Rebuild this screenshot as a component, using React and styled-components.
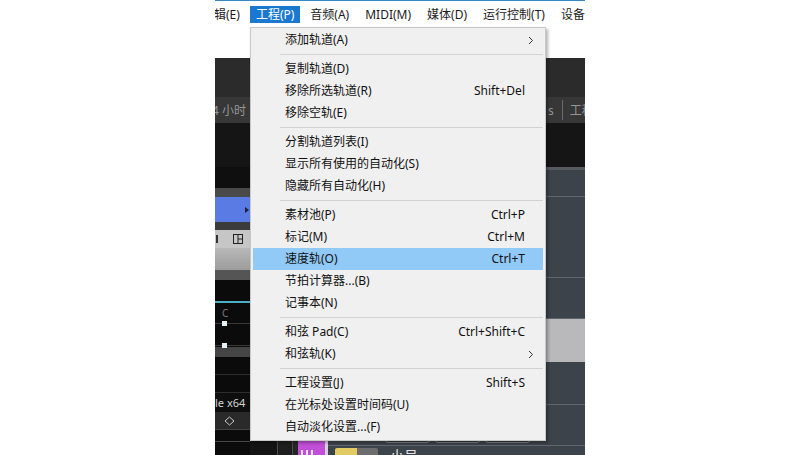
import React from "react";
import styled, { createGlobalStyle } from "styled-components";

const GlobalStyle = createGlobalStyle`
  html, body { margin: 0; padding: 0; background: #ffffff; }
  body { font-family: "Noto Sans", "Noto Sans CJK SC", sans-serif; }
`;

const Page = styled.div`
  width: 800px;
  height: 455px;
  display: flex;
  justify-content: center;
  overflow: hidden;
  background: #ffffff;
`;

const Shot = styled.div`
  position: relative;
  width: 370px;
  height: 455px;
  display: flex;
  flex-direction: column;
  overflow: hidden;
  background: #ffffff;
`;

const TopLine = styled.div`
  height: 1px;
  flex: none;
  background: #3489c4;
`;

const MenuBar = styled.div`
  height: 27px;
  flex: none;
  display: flex;
  align-items: center;
  gap: 4px;
  margin-left: -19px;
  background: #ffffff;
  white-space: nowrap;
  font-size: 12px;
  color: #1b1b1b;
`;

const BarItem = styled.div`
  padding: 0 6px;
  height: 17px;
  line-height: 17px;
  background: ${(p) => (p.$active ? "#1a78d0" : "transparent")};
  color: ${(p) => (p.$active ? "#ffffff" : "#1b1b1b")};
`;

const WhiteGap = styled.div`
  height: 30px;
  flex: none;
  background: #ffffff;
`;

const DarkBar = styled.div`
  height: 39px;
  flex: none;
  background: #2b2b2b;
`;

const Toolbar = styled.div`
  height: 26px;
  flex: none;
  background: #373737;
  display: flex;
  align-items: center;
  justify-content: space-between;
  font-size: 12px;
  color: #959595;
  white-space: nowrap;
`;

const ToolText = styled.span`
  margin-left: -3px;
`;

const ToolRight = styled.div`
  width: 37px;
  display: flex;
  align-items: center;
  overflow: hidden;
`;

const ToolDivider = styled.span`
  width: 1px;
  height: 20px;
  background: #6a6a6a;
  margin: 0 7px 0 8px;
  flex: none;
`;

const BlackBand = styled.div`
  height: 44px;
  flex: none;
  background: #151515;
`;

const Main = styled.div`
  flex: 1;
  display: flex;
  min-height: 0;
`;

/* ---------- left strip ---------- */
const LeftCol = styled.div`
  width: 35px;
  flex: none;
  display: flex;
  flex-direction: column;
  background: #0b0b0b;
`;

const Band = styled.div`
  height: ${(p) => p.$h}px;
  flex: none;
  box-sizing: border-box;
  background: ${(p) => p.$bg};
  border-bottom: ${(p) => (p.$line ? `1px solid ${p.$line}` : "none")};
  display: flex;
  align-items: center;
  justify-content: ${(p) => p.$justify || "flex-start"};
  overflow: hidden;
  white-space: nowrap;
`;

const Caret = styled.span`
  width: 0;
  height: 0;
  border-left: 4px solid #1e2233;
  border-top: 3px solid transparent;
  border-bottom: 3px solid transparent;
  margin-right: 1px;
`;

const GripBar = styled.span`
  width: 2px;
  height: 8px;
  background: #333;
  margin-left: 1px;
  margin-right: 15px;
`;

const Lane = styled.div`
  height: 67px;
  flex: none;
  box-sizing: border-box;
  background: #0b0b0b;
  display: flex;
  flex-direction: column;
  padding-top: 21px;
`;

const TealLine = styled.div`
  height: 2px;
  background: #4cb0c2;
`;

const LaneLabel = styled.div`
  height: 20px;
  line-height: 20px;
  font-size: 10px;
  color: #7a7a7a;
  padding-left: 7px;
`;

const NodeLine = styled.div`
  height: 1px;
  background: #3a3a3a;
  position: relative;
  margin-top: ${(p) => p.$mt || 0}px;
`;

const Node = styled.span`
  position: absolute;
  left: 7px;
  top: -2px;
  width: 5px;
  height: 5px;
  background: #e6f1f5;
`;

const SmallText = styled.span`
  font-size: 11px;
  color: #d2d2d2;
`;

/* ---------- middle strip ---------- */
const MidCol = styled.div`
  width: 78px;
  flex: none;
  display: flex;
  flex-direction: column;
`;

const MidFill = styled.div`
  flex: 1;
  background: #141414;
`;

const MidStrip = styled.div`
  height: 15px;
  flex: none;
  display: flex;
`;

const Seg = styled.div`
  width: ${(p) => p.$w}px;
  flex: none;
  background: ${(p) => p.$bg};
`;

const PurpleSeg = styled.div`
  width: 27px;
  flex: none;
  background: #c24fd8;
  display: flex;
  align-items: flex-end;
  gap: 3px;
  padding-left: 3px;
  box-sizing: border-box;
`;

const Tick = styled.span`
  width: 2px;
  height: 5px;
  background: #f4e6f8;
`;

/* ---------- tracks ---------- */
const Tracks = styled.div`
  flex: 1;
  display: flex;
  flex-direction: column;
  border-top: 3px solid #575b60;
  background: #3d434a;
`;

const TrackRow = styled.div`
  height: ${(p) => (p.$h ? `${p.$h}px` : "auto")};
  flex: ${(p) => (p.$h ? "none" : "1")};
  box-sizing: border-box;
  background: ${(p) => (p.$sel ? "#b9b9bb" : "#3d434a")};
  border-bottom: ${(p) => (p.$noline ? "none" : "1px solid #62676d")};
  display: flex;
  align-items: ${(p) => (p.$bottom ? "flex-end" : "flex-start")};
  padding: ${(p) => p.$pad || "0"};
  gap: 5px;
  overflow: hidden;
`;

const TrackBtn = styled.div`
  width: 45px;
  height: 16px;
  box-sizing: border-box;
  border: 1px solid #7b7f85;
  border-radius: 3px;
  background: #353a40;
`;

const ColorBtn = styled.div`
  width: 43px;
  height: 14px;
  flex: none;
  display: flex;
  border-radius: 2px;
  overflow: hidden;
`;

const ColorHalf = styled.span`
  flex: 1;
  background: ${(p) => p.$c};
`;

const TrackName = styled.span`
  margin-left: 7px;
  font-size: 14px;
  line-height: 14px;
  margin-top: 1px;
  color: #e4e4e4;
`;

/* ---------- dropdown menu ---------- */
const Dropdown = styled.div`
  position: absolute;
  left: 35px;
  top: 27px;
  width: 296px;
  box-sizing: border-box;
  background: #f0f0f0;
  border: 1px solid #c8c8c8;
  box-shadow: 2px 2px 3px rgba(0, 0, 0, 0.3);
  padding: 1px 0 2px;
  font-size: 12px;
  color: #111111;
  z-index: 2;
`;

const Item = styled.div`
  display: grid;
  grid-template-columns: 1fr auto 16px;
  align-items: center;
  height: 22px;
  line-height: 22px;
  margin: 0 2px;
  padding: 0 2px 0 32px;
  white-space: nowrap;
  background: ${(p) => (p.$hl ? "#91c9f7" : "transparent")};
`;

const Shortcut = styled.span`
  text-align: right;
`;

const ArrowCell = styled.span`
  display: flex;
  align-items: center;
  padding-left: 3px;
`;

const Separator = styled.div`
  height: 1px;
  margin: 3px 2px 3px 29px;
  background: #d3d3d3;
`;

const Chevron = () => (
  <svg width="6" height="9" viewBox="0 0 6 9">
    <polyline points="1,1 4.5,4.5 1,8" fill="none" stroke="#333" strokeWidth="1" />
  </svg>
);

const menu = [
  { label: "添加轨道(A)", sub: true },
  "sep",
  { label: "复制轨道(D)" },
  { label: "移除所选轨道(R)", key: "Shift+Del" },
  { label: "移除空轨(E)" },
  "sep",
  { label: "分割轨道列表(I)" },
  { label: "显示所有使用的自动化(S)" },
  { label: "隐藏所有自动化(H)" },
  "sep",
  { label: "素材池(P)", key: "Ctrl+P" },
  { label: "标记(M)", key: "Ctrl+M" },
  { label: "速度轨(O)", key: "Ctrl+T", hl: true },
  { label: "节拍计算器...(B)" },
  { label: "记事本(N)" },
  "sep",
  { label: "和弦 Pad(C)", key: "Ctrl+Shift+C" },
  { label: "和弦轨(K)", sub: true },
  "sep",
  { label: "工程设置(J)", key: "Shift+S" },
  { label: "在光标处设置时间码(U)" },
  { label: "自动淡化设置...(F)" },
];

const barItems = ["编辑(E)", "工程(P)", "音频(A)", "MIDI(M)", "媒体(D)", "运行控制(T)", "设备"];

export default function App() {
  return (
    <Page>
      <GlobalStyle />
      <Shot>
        <TopLine />
        <MenuBar>
          {barItems.map((t) => (
            <BarItem key={t} $active={t === "工程(P)"}>
              {t}
            </BarItem>
          ))}
        </MenuBar>
        <WhiteGap />
        <DarkBar />
        <Toolbar>
          <ToolText>4 小时</ToolText>
          <ToolRight>
            <span>s</span>
            <ToolDivider />
            <span>工程</span>
          </ToolRight>
        </Toolbar>
        <BlackBand />
        <Main>
          <LeftCol>
            <Band $h={21} $bg="#0f0f0f" />
            <Band $h={9} $bg="#4a4a4a" />
            <Band $h={25} $bg="#5a7be3" $justify="flex-end">
              <Caret />
            </Band>
            <Band $h={8} $bg="#3b3b3b" />
            <Band $h={18} $bg="#c6c6c6">
              <GripBar />
              <svg width="10" height="10" viewBox="0 0 10 10">
                <rect x="0.5" y="0.5" width="9" height="9" fill="none" stroke="#222" />
                <line x1="5" y1="0.5" x2="5" y2="9.5" stroke="#222" />
                <line x1="5" y1="5" x2="9.5" y2="5" stroke="#222" />
              </svg>
            </Band>
            <Band $h={22} $bg="linear-gradient(#b8b8b8, #9c9c9c)" />
            <Band $h={10} $bg="#555555" />
            <Lane>
              <TealLine />
              <LaneLabel>C</LaneLabel>
              <NodeLine>
                <Node />
              </NodeLine>
              <NodeLine $mt={21}>
                <Node />
              </NodeLine>
            </Lane>
            <Band $h={10} $bg="#454545" />
            <Band $h={18} $bg="#0b0b0b" $line="#2e2e2e" />
            <Band $h={18} $bg="#0b0b0b" $line="#2e2e2e" />
            <Band $h={19} $bg="#0e0e0e">
              <SmallText>le x64</SmallText>
            </Band>
            <Band $h={18} $bg="#2a2a2a" $line="#444444">
              <svg width="35" height="10" viewBox="0 0 35 10">
                <polygon points="14.5,1 19,5 14.5,9 10,5" fill="none" stroke="#c8c8c8" />
              </svg>
            </Band>
            <Band $h={12} $bg="#0b0b0b" $line="#474747" />
          </LeftCol>
          <MidCol>
            <MidFill />
            <MidStrip>
              <Seg $w={27} $bg="#141414" />
              <Seg $w={1} $bg="#4a4a4a" />
              <Seg $w={14} $bg="#1e1e1e" />
              <Seg $w={1} $bg="#4a4a4a" />
              <Seg $w={5} $bg="#262626" />
              <PurpleSeg>
                <Tick />
                <Tick />
                <Tick />
              </PurpleSeg>
              <Seg $w={3} $bg="#d8cfe0" />
            </MidStrip>
          </MidCol>
          <Tracks>
            <TrackRow $h={27} />
            <TrackRow $h={81} />
            <TrackRow $h={41} />
            <TrackRow $h={43} $sel $noline />
            <TrackRow $h={43} />
            <TrackRow $h={41} $bottom $pad="0 0 2px 57px">
              <TrackBtn />
              <TrackBtn />
              <TrackBtn />
            </TrackRow>
            <TrackRow $noline $pad="2px 0 0 7px">
              <ColorBtn>
                <ColorHalf $c="#e3cb63" />
                <ColorHalf $c="#6d6d70" />
              </ColorBtn>
              <TrackName>小号</TrackName>
            </TrackRow>
          </Tracks>
        </Main>

        <Dropdown>
          {menu.map((m, i) =>
            m === "sep" ? (
              <Separator key={i} />
            ) : (
              <Item key={i} $hl={m.hl}>
                <span>{m.label}</span>
                <Shortcut>{m.key || ""}</Shortcut>
                <ArrowCell>{m.sub ? <Chevron /> : null}</ArrowCell>
              </Item>
            )
          )}
        </Dropdown>
      </Shot>
    </Page>
  );
}
